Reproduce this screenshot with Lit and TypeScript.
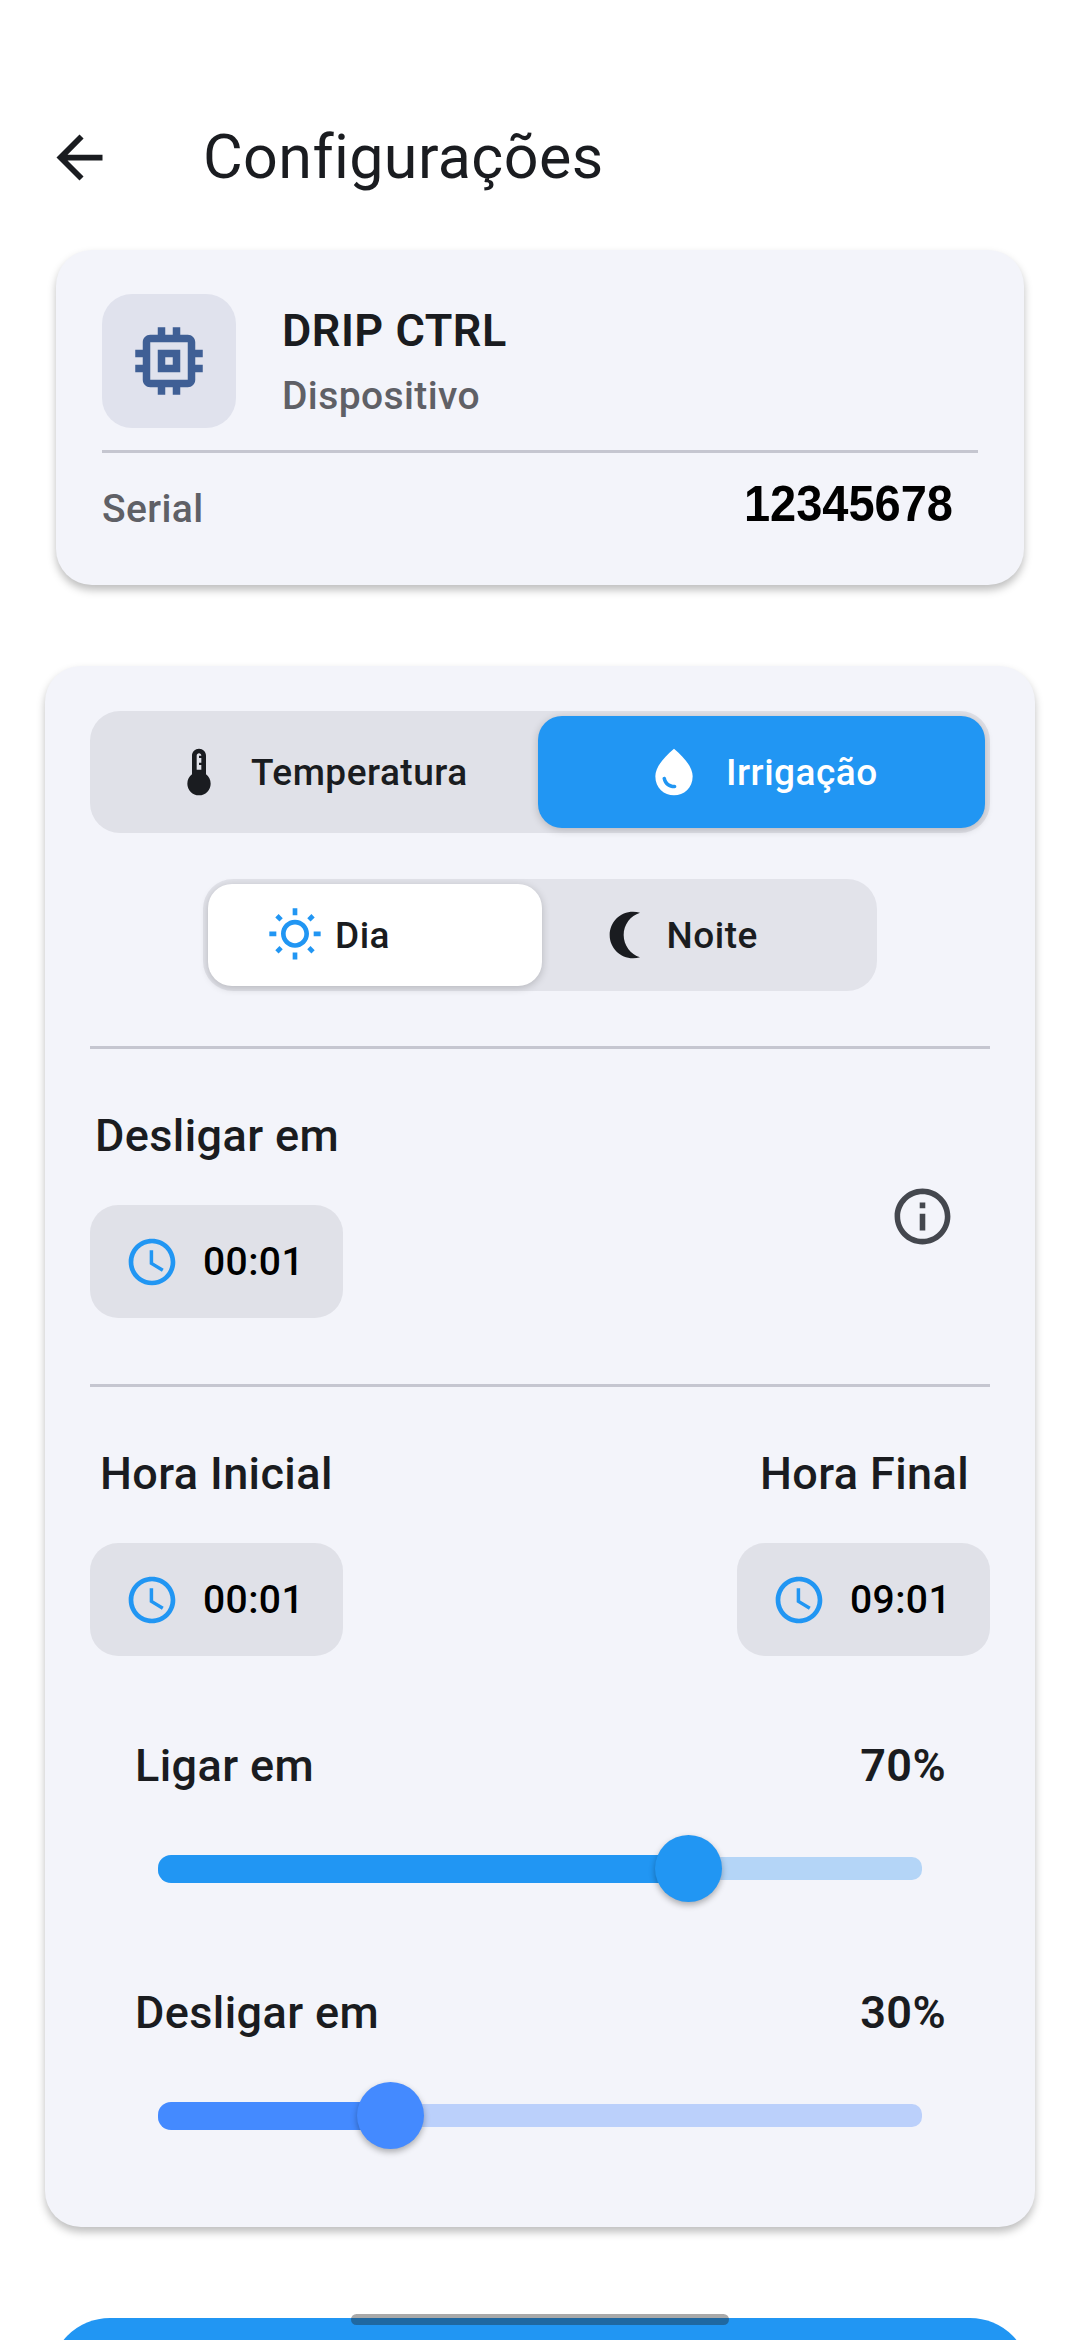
import { LitElement, html, css, svg } from "lit";
import { customElement } from "lit/decorators.js";

const P = {
  back: "M20 11H7.83l5.59-5.59L12 4l-8 8 8 8 1.41-1.41L7.83 13H20v-2z",
  chip: "M15 9H9v6h6V9zm-2 4h-2v-2h2v2zm8-2V9h-2V7c0-1.1-.9-2-2-2h-2V3h-2v2h-2V3H9v2H7c-1.1 0-2 .9-2 2v2H3v2h2v2H3v2h2v2c0 1.1.9 2 2 2h2v2h2v-2h2v2h2v-2h2c1.1 0 2-.9 2-2v-2h2v-2h-2v-2h2zm-4 6H7V7h10v10z",
  therm: "M15 13V5c0-1.66-1.34-3-3-3S9 3.34 9 5v8c-1.21.91-2 2.37-2 4 0 2.76 2.24 5 5 5s5-2.24 5-5c0-1.63-.79-3.09-2-4zm-4-8c0-.55.45-1 1-1s1 .45 1 1h-1v1h1v2h-1v1h1v2h-2V5z",
  drop: "M12,2c-5.33,4.55-8,8.48-8,11.8c0,4.98,3.8,8.2,8,8.2s8-3.22,8-8.2C20,10.48,17.33,6.55,12,2z M7.83,14 c0.37,0,0.67,0.26,0.74,0.62c0.41,2.22,2.28,2.98,3.64,2.87c0.43-0.02,0.79,0.32,0.79,0.75c0,0.4-0.32,0.73-0.72,0.75 c-2.13,0.13-4.62-1.09-5.19-4.12C7.01,14.42,7.37,14,7.83,14z",
  sun: "M6.76 4.84l-1.8-1.79-1.41 1.41 1.79 1.79zM1 10.5h3v2H1zM11 .55h2V3.5h-2zm8.04 2.495l1.408 1.407-1.79 1.79-1.407-1.408zm-1.8 15.115l1.79 1.8 1.41-1.41-1.8-1.79zM20 10.5h3v2h-3zm-8-5c-3.31 0-6 2.69-6 6s2.69 6 6 6 6-2.69 6-6-2.69-6-6-6zm0 10c-2.21 0-4-1.79-4-4s1.79-4 4-4 4 1.79 4 4-1.79 4-4 4zm-1 4h2v2.95h-2zm-7.45-.96l1.41 1.41 1.79-1.8-1.41-1.41z",
  moon: "M15 2c1.05 0 2.05.16 3 .46C13.94 3.73 11 7.52 11 12c0 4.48 2.94 8.27 7 9.54-.95.3-1.95.46-3 .46C9.48 22 5 17.52 5 12S9.48 2 15 2z",
  clock: "M11.99 2C6.47 2 2 6.48 2 12s4.47 10 9.99 10C17.52 22 22 17.52 22 12S17.52 2 11.99 2zM12 20c-4.42 0-8-3.58-8-8s3.58-8 8-8 8 3.58 8 8-3.58 8-8 8zm.5-13H11v6l5.25 3.15.75-1.23-4.5-2.67z",
  info: "M11 7h2v2h-2zm0 4h2v6h-2zm1-9C6.48 2 2 6.48 2 12s4.48 10 10 10 10-4.48 10-10S17.52 2 12 2zm0 18c-4.41 0-8-3.59-8-8s3.59-8 8-8 8 3.59 8 8-3.59 8-8 8z",
};

const icon = (d: string, cls: string) => html`<svg class="icon ${cls}" viewBox="0 0 24 24">${svg`<path d=${d}></path>`}</svg>`;

@customElement("app-root")
export class AppRoot extends LitElement {
  static styles = css`
    :host { display: block; position: relative; width: 1080px; height: 2340px; overflow: hidden; background: #fff; font-family: Roboto, sans-serif; color: #1a1c20; }
    .icon { display: block; flex: none; fill: currentColor; }
    .i56 { width: 56px; height: 56px; }
    .back { width: 69px; height: 69px; }
    .chipicon { width: 90px; height: 90px; color: #3f5f95; }
    .blue { color: #2196f3; }
    .dark { color: #1a1c20; }
    .white { color: #fff; }
    .infoicon { width: 67px; height: 67px; color: #44474e; }

    header { height: 250px; box-sizing: border-box; padding: 123px 0 0 45px; display: flex; align-items: flex-start; }
    h1 { margin: -6px 0 0 89px; font-size: 61px; letter-spacing: .4px; line-height: 80px; font-weight: 400; color: #1a1c20; }

    .card { background: #f3f4fa; box-shadow: 0 5px 9px rgba(0,0,0,.26); box-sizing: border-box; }
    .device { margin: 0 56px; height: 335px; border-radius: 36px; padding: 44px 46px 0; }
    .dev-top { display: flex; gap: 46px; height: 156px; align-items: flex-start; }
    .dev-box { width: 134px; height: 134px; border-radius: 30px; background: #e0e2ed; display: flex; align-items: center; justify-content: center; }
    .dev-name { font-size: 45px; letter-spacing: .5px; line-height: 50px; font-weight: 600; margin-top: 12px; color: #1a1c20; }
    .dev-sub { font-size: 39px; letter-spacing: .4px; line-height: 46px; font-weight: 500; color: #5f6066; margin-top: 17px; }
    .rule { height: 3px; background: #c5c6d0; }
    .serial { display: flex; justify-content: space-between; align-items: flex-start; padding-right: 25px; }
    .serial .k { font-size: 39px; letter-spacing: .4px; line-height: 46px; font-weight: 500; color: #5f6066; margin-top: 33px; }
    .serial .v { font-family: "Liberation Sans", Arial, sans-serif; font-size: 47px; line-height: 54px; font-weight: 700; color: #000; margin-top: 24px; transform: scaleY(1.08); }

    .panel { margin: 81px 45px 0; height: 1561px; border-radius: 36px; padding: 45px 45px 0; }
    .tabs { display: flex; box-sizing: border-box; height: 122px; padding: 5px; border-radius: 30px; background: #e0e1e8; }
    .tab { flex: none; display: flex; align-items: center; box-sizing: border-box; border-radius: 24px; gap: 24px; font-size: 37px; letter-spacing: .5px; font-weight: 500; }
    .t1 { width: 443px; padding-left: 76px; }
    .t2 { width: 447px; padding-left: 108px; background: #2196f3; color: #fff; box-shadow: 0 2px 8px rgba(0,0,0,.2); }
    .daynight { display: flex; box-sizing: border-box; width: 674px; height: 112px; margin: 46px auto 0; padding: 5px; border-radius: 30px; background: #e2e3ea; }
    .dn { flex: 1; display: flex; align-items: center; box-sizing: border-box; border-radius: 24px; font-size: 37px; letter-spacing: .5px; font-weight: 500; }
    .d1 { padding-left: 59px; gap: 12px; background: #fff; box-shadow: 0 2px 8px rgba(0,0,0,.2); }
    .d2 { padding-left: 56px; gap: 13px; }
    .sep { height: 3px; background: #c5c6d0; }
    .s1 { margin-top: 55px; }
    .off { display: flex; justify-content: space-between; height: 335px; }
    .label { font-size: 45px; letter-spacing: .4px; line-height: 50px; font-weight: 500; color: #1a1c20; }
    .off .label { margin: 62px 0 0 5px; }
    .time { display: flex; align-items: center; gap: 23px; width: 253px; height: 113px; box-sizing: border-box; padding-left: 34px; border-radius: 28px; background: #e0e1e8; font-size: 39px; letter-spacing: .4px; font-weight: 500; color: #000; }
    .off .time { margin-top: 44px; }
    .info { margin: 134px 34px 0 0; }
    .hours { display: flex; justify-content: space-between; padding-top: 62px; }
    .col { display: flex; flex-direction: column; }
    .col .time { margin-top: 44px; }
    .col.a .label { margin-left: 10px; }
    .col.b { align-items: flex-end; }
    .col.b .label { margin-right: 21px; }
    .sl-head { display: flex; justify-content: space-between; padding: 0 44px 0 45px; }
    .pct { font-weight: 600; }
    .track { position: relative; height: 23px; margin: 0 68px; border-radius: 10px; }
    .fill { position: absolute; left: 0; top: -2.5px; height: 28px; border-radius: 13px; }
    .thumb { position: absolute; top: -22px; width: 67px; height: 67px; margin-left: -33.5px; border-radius: 50%; box-shadow: 0 3px 6px rgba(0,0,0,.3); }
    .sl1 { margin-top: 85px; }
    .sl1 .track { margin-top: 66px; background: #b4d5f7; }
    .sl2 { margin-top: 108px; }
    .sl2 .track { margin-top: 66px; background: #bbd0fb; }
    .cta { margin: 91px 50px 0; height: 120px; border-radius: 70px; background: #2196f3; }
    .home { position: absolute; left: 351px; top: 2314px; width: 378px; height: 11px; border-radius: 6px; background: rgba(30,30,30,.38); }
  `;

  slider(label: string, value: number, c: string, cls: string) {
    const w = 765;
    const px = (value === 70 ? 531 : 233) / w * 100;
    return html`<div class="${cls}">
      <div class="sl-head label"><span>${label}</span><span class="pct">${value}%</span></div>
      <div class="track">
        <div class="fill" style="width:${px}%;background:${c}"></div>
        <div class="thumb" style="left:${px}%;background:${c}"></div>
      </div>
    </div>`;
  }

  time(t: string) {
    return html`<div class="time">${icon(P.clock, "i56 blue")}<span>${t}</span></div>`;
  }

  render() {
    return html`
      <header>
        ${icon(P.back, "back dark")}
        <h1>Configurações</h1>
      </header>
      <section class="card device">
        <div class="dev-top">
          <div class="dev-box">${icon(P.chip, "chipicon")}</div>
          <div>
            <div class="dev-name">DRIP CTRL</div>
            <div class="dev-sub">Dispositivo</div>
          </div>
        </div>
        <div class="rule"></div>
        <div class="serial"><span class="k">Serial</span><span class="v">12345678</span></div>
      </section>
      <section class="card panel">
        <div class="tabs">
          <div class="tab t1">${icon(P.therm, "i56 dark")}<span>Temperatura</span></div>
          <div class="tab t2">${icon(P.drop, "i56 white")}<span>Irrigação</span></div>
        </div>
        <div class="daynight">
          <div class="dn d1">${icon(P.sun, "i56 blue")}<span>Dia</span></div>
          <div class="dn d2">${icon(P.moon, "i56 dark")}<span>Noite</span></div>
        </div>
        <div class="sep s1"></div>
        <div class="off">
          <div>
            <div class="label">Desligar em</div>
            ${this.time("00:01")}
          </div>
          <div class="info">${icon(P.info, "infoicon")}</div>
        </div>
        <div class="sep"></div>
        <div class="hours">
          <div class="col a"><div class="label">Hora Inicial</div>${this.time("00:01")}</div>
          <div class="col b"><div class="label">Hora Final</div>${this.time("09:01")}</div>
        </div>
        ${this.slider("Ligar em", 70, "#2196f3", "sl1")}
        ${this.slider("Desligar em", 30, "#448aff", "sl2")}
      </section>
      <div class="cta"></div>
      <div class="home"></div>
    `;
  }
}
